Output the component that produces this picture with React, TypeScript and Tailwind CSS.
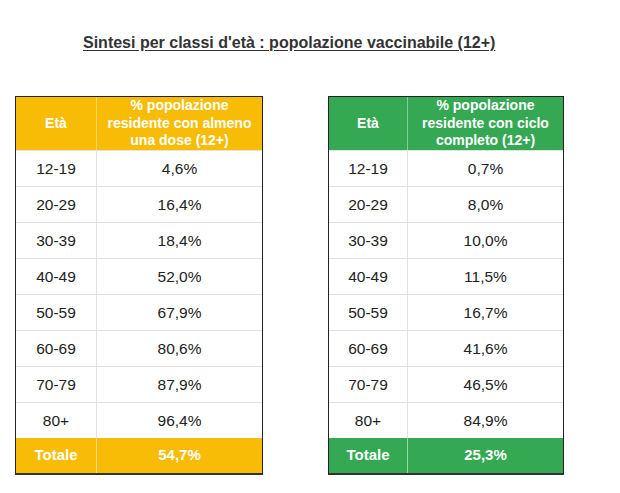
import React from "react";

const left = [
  ["12-19", "4,6%"],
  ["20-29", "16,4%"],
  ["30-39", "18,4%"],
  ["40-49", "52,0%"],
  ["50-59", "67,9%"],
  ["60-69", "80,6%"],
  ["70-79", "87,9%"],
  ["80+", "96,4%"],
];
const right = [
  ["12-19", "0,7%"],
  ["20-29", "8,0%"],
  ["30-39", "10,0%"],
  ["40-49", "11,5%"],
  ["50-59", "16,7%"],
  ["60-69", "41,6%"],
  ["70-79", "46,5%"],
  ["80+", "84,9%"],
];

function Table({
  rows,
  header,
  total,
  green,
  c1,
  c2,
}: {
  rows: string[][];
  header: string[];
  total: string;
  green?: boolean;
  c1: string;
  c2: string;
}) {
  const bg = green ? "bg-[#34a853]" : "bg-[#f9bc06]";
  return (
    <div className="border border-[#222] border-b-2 border-b-[#333]">
      <div className={`flex h-[53px] ${bg} text-white font-bold text-[14px] leading-[17.5px]`}>
        <div className={`${c1} flex items-center justify-center border-r border-white/40`}>Età</div>
        <div className={`${c2} flex items-center justify-center text-center`}>
          {header.map((h, i) => (
            <React.Fragment key={i}>
              {h}
              {i < header.length - 1 && <br />}
            </React.Fragment>
          ))}
        </div>
      </div>
      {rows.map(([a, b]) => (
        <div key={a} className="flex h-[36px] bg-white text-[15.5px] text-[#222] border-t border-[#e2e2e2]">
          <div className={`${c1} flex items-center justify-center border-r border-[#e2e2e2]`}>{a}</div>
          <div className={`${c2} flex items-center justify-center`}>{b}</div>
        </div>
      ))}
      <div className={`flex h-[35px] ${bg} text-white font-bold text-[15px]`}>
        <div className={`${c1} flex items-center justify-center border-r border-white/50`}>Totale</div>
        <div className={`${c2} flex items-center justify-center`}>{total}</div>
      </div>
    </div>
  );
}

export default function App() {
  return (
    <div className="w-[620px] h-[493px] bg-white font-['Liberation_Sans',Arial,sans-serif] relative">
      <div className="pt-[33px] pl-[83px]">
        <h1 className="text-[16px] font-bold text-[#333] underline underline-offset-2 leading-[20px]">
          Sintesi per classi d'età : popolazione vaccinabile (12+)
        </h1>
      </div>
      <div className="flex mt-[43px] pl-[15px] gap-[65px] items-start">
        <Table
          rows={left}
          header={["% popolazione", "residente con almeno", "una dose (12+)"]}
          total="54,7%"
          c1="w-[81px]"
          c2="w-[165px]"
        />
        <Table
          rows={right}
          header={["% popolazione", "residente con ciclo", "completo (12+)"]}
          total="25,3%"
          green
          c1="w-[79px]"
          c2="w-[155px]"
        />
      </div>
    </div>
  );
}
